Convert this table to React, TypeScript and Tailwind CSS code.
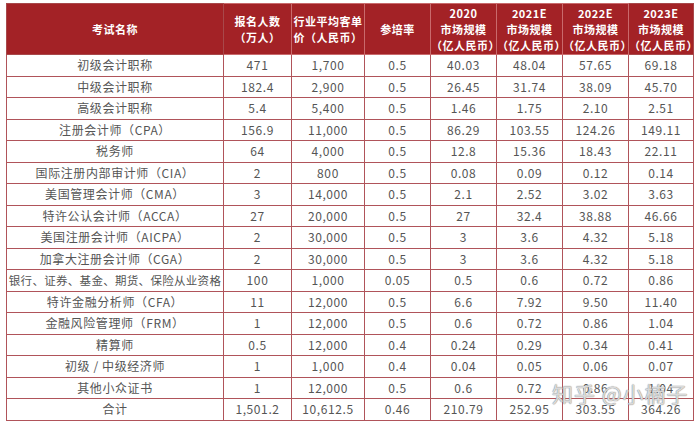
import React from "react";

const rows: string[][] = [
  ["初级会计职称", "471", "1,700", "0.5", "40.03", "48.04", "57.65", "69.18"],
  ["中级会计职称", "182.4", "2,900", "0.5", "26.45", "31.74", "38.09", "45.70"],
  ["高级会计职称", "5.4", "5,400", "0.5", "1.46", "1.75", "2.10", "2.51"],
  ["注册会计师（CPA）", "156.9", "11,000", "0.5", "86.29", "103.55", "124.26", "149.11"],
  ["税务师", "64", "4,000", "0.5", "12.8", "15.36", "18.43", "22.11"],
  ["国际注册内部审计师（CIA）", "2", "800", "0.5", "0.08", "0.09", "0.12", "0.14"],
  ["美国管理会计师（CMA）", "3", "14,000", "0.5", "2.1", "2.52", "3.02", "3.63"],
  ["特许公认会计师（ACCA）", "27", "20,000", "0.5", "27", "32.4", "38.88", "46.66"],
  ["美国注册会计师（AICPA）", "2", "30,000", "0.5", "3", "3.6", "4.32", "5.18"],
  ["加拿大注册会计师（CGA）", "2", "30,000", "0.5", "3", "3.6", "4.32", "5.18"],
  ["银行、证券、基金、期货、保险从业资格", "100", "1,000", "0.05", "0.5", "0.6", "0.72", "0.86"],
  ["特许金融分析师（CFA）", "11", "12,000", "0.5", "6.6", "7.92", "9.50", "11.40"],
  ["金融风险管理师（FRM）", "1", "12,000", "0.5", "0.6", "0.72", "0.86", "1.04"],
  ["精算师", "0.5", "12,000", "0.4", "0.24", "0.29", "0.34", "0.41"],
  ["初级 / 中级经济师", "1", "1,000", "0.4", "0.04", "0.05", "0.06", "0.07"],
  ["其他小众证书", "1", "12,000", "0.5", "0.6", "0.72", "0.86", "1.04"],
  ["合计", "1,501.2", "10,612.5", "0.46", "210.79", "252.95", "303.55", "364.26"],
];

const widths = ["w-[217px]", "w-[68px]", "w-[73px]", "w-[66px]", "w-[66px]", "w-[66px]", "w-[66px]", "w-[65px]"];

export default function App() {
  const font = { fontFamily: '"Noto Sans CJK SC", "Noto Sans", sans-serif' };
  return (
    <div className="relative w-[700px] h-[426px] bg-white overflow-hidden" style={font}>
      <div className="pt-[3px] pl-[6px]">
        <table className="table-fixed border-collapse w-[688px] text-center">
          <colgroup>
            {widths.map((w, i) => (
              <col key={i} className={w} />
            ))}
          </colgroup>
          <thead>
            <tr className="h-[51px] bg-[#a32226] text-white text-[11px] font-bold leading-[16px] tracking-[0.5px]">
              <th className="border border-[#a8484a]">考试名称</th>
              <th className="border border-[#c96a6c]">报名人数<br />（万人）</th>
              <th className="border border-[#c96a6c] px-[1px]">行业平均客单价（人民币）</th>
              <th className="border border-[#c96a6c]">参培率</th>
              <th className="border border-[#c96a6c]">2020<br />市场规模<br />（亿人民币）</th>
              <th className="border border-[#c96a6c]">2021E<br />市场规模<br />（亿人民币）</th>
              <th className="border border-[#c96a6c]">2022E<br />市场规模<br />（亿人民币）</th>
              <th className="border border-[#a8484a]">2023E<br />市场规模<br />（亿人民币）</th>
            </tr>
          </thead>
          <tbody>
            {rows.map((r, i) => (
              <tr key={i} className="h-[21.5px] text-[12px] text-[#555] leading-[14px] tracking-[0.6px]">
                {r.map((c, j) => (
                  <td key={j} className={`border border-[#b0545a] p-0 whitespace-nowrap ${j === 0 && c.length > 15 ? "tracking-[0.3px] text-[11.5px]" : ""}`}>
                    {c}
                  </td>
                ))}
              </tr>
            ))}
          </tbody>
        </table>
      </div>
      <div
        className="absolute left-[552px] top-[378px] text-[21px] tracking-[1px] text-white/70 whitespace-nowrap"
        style={{ textShadow: "0 0 1px #888, 0 0 1px #888" }}
      >
        知乎 @小楠子
      </div>
    </div>
  );
}
